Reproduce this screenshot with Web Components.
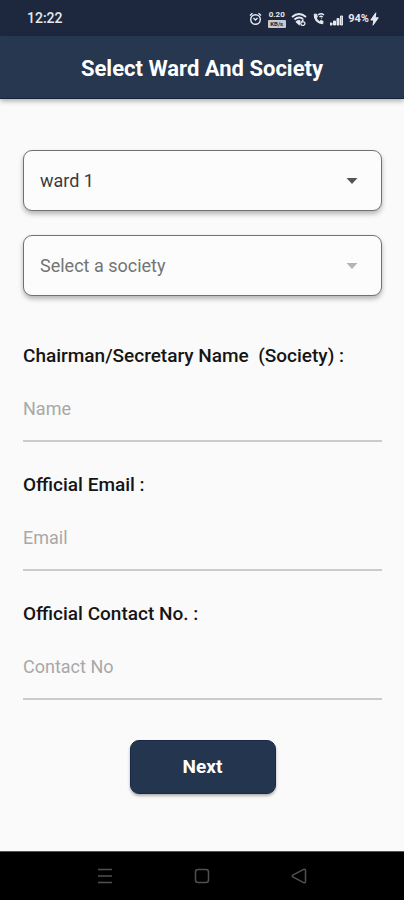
<!DOCTYPE html>
<html lang="en">
<head>
<meta charset="utf-8">
<meta name="viewport" content="width=device-width, initial-scale=1">
<title>Select Ward And Society</title>
<style>
  html, body { margin: 0; height: 100%; }
  body { font-family: Roboto, "Liberation Sans", sans-serif; background: #fafafa; color: #151515; }
</style>
</head>
<body>
<app-screen>
  <status-bar slot="top" time="12:22" rate="0.20" battery="94%"></status-bar>
  <app-bar slot="top">Select Ward And Society</app-bar>
  <select-card label="Ward" value="ward 1"></select-card>
  <select-card label="Society" placeholder="Select a society"></select-card>
  <text-field class="first" placeholder="Name" type="text">Chairman/Secretary Name&nbsp; (Society) :</text-field>
  <text-field placeholder="Email" type="email">Official Email :</text-field>
  <text-field placeholder="Contact No" type="tel">Official Contact No. :</text-field>
  <primary-button>Next</primary-button>
  <nav-bar slot="bottom"></nav-bar>
</app-screen>

<script>
const define = (name, render) => customElements.define(name, class extends HTMLElement {
  connectedCallback() {
    if (this.shadowRoot) return;
    this.attachShadow({ mode: 'open' }).innerHTML = render(this);
  }
});

define('app-screen', () => `
  <style>
    :host { display: flex; flex-direction: column; min-height: 100vh; }
    header { position: relative; }
    main { flex: 1; display: flex; flex-direction: column; padding: 51px 22px 24px 23px; }
    ::slotted(select-card) { margin-bottom: 24px; }
    ::slotted(.first) { margin-top: 25px; }
    ::slotted(primary-button) { margin-top: 8px; align-self: center; }
  </style>
  <header><slot name="top"></slot></header>
  <main><slot></slot></main>
  <footer><slot name="bottom"></slot></footer>`);

define('status-bar', el => `
  <style>
    :host { display: flex; align-items: center; justify-content: space-between; height: 36px;
      padding: 0 25px 0 27px; background: #1d283e; color: #e4e9f1; }
    time { font-size: 14px; font-weight: 500; line-height: 16px; }
    .icons { display: flex; align-items: center; gap: 5px; padding-top: 2px; }
    svg { display: block; fill: none; stroke: currentColor; }
    .rate { display: flex; flex-direction: column; align-items: center; width: 19px; font-weight: 700; }
    .num { font-size: 8px; line-height: 10px; }
    .unit { width: 18px; background: #c5cbd6; color: #1d283e; font-size: 6px; line-height: 8px; text-align: center; border-radius: 1px; }
    .battery { display: flex; align-items: center; gap: 1px; font-size: 11px; font-weight: 700; line-height: 12px; }
  </style>
  <time>${el.getAttribute('time')}</time>
  <div class="icons">
    <svg width="13" height="14" viewBox="0 0 13 14" stroke-width="1.4" aria-label="Alarm" role="img">
      <circle cx="6.5" cy="7.5" r="4.8"/><path d="M4.5 6l2 2 2-2M1 3.5 3.5 1.2M12 3.5 9.5 1.2"/></svg>
    <div class="rate"><span class="num">${el.getAttribute('rate')}</span><span class="unit">KB/s</span></div>
    <svg width="16" height="14" viewBox="0 0 16 14" stroke-width="1.9" aria-label="Wi-Fi" role="img">
      <path d="M1 5Q8-1 15 5M3.4 7.5Q8 3.8 12 7"/><path d="M5.8 10Q7 8.7 8.5 9.2L8 12z" fill="currentColor"/>
      <path d="M12.5 7.5 10.5 10a2 2 0 1 0 3 .3q-1-1-2.5 0" stroke-width="1.3"/></svg>
    <svg width="13" height="14" viewBox="0 0 13 14" aria-label="Wi-Fi calling" role="img">
      <path d="M2.2 2.2Q2 11 10.8 11.8L11 9.2 8.7 8.5 7.4 9.5Q5 8.3 4.3 6L5.3 4.9 4.6 2.2z" fill="currentColor"/>
      <path d="M6 3Q9 .5 12 3M7.5 5Q9 3.6 10.8 5M9 6.5h.6" stroke-width="1.4"/></svg>
    <svg width="13" height="14" viewBox="0 0 13 14" stroke="none" aria-label="Signal" role="img">
      <path fill="currentColor" d="M0 11h2v2H0zM3.5 9h2v4h-2zM7 6.5h2V13H7z"/><path fill="#a5adba" d="M10.5 4h2v9h-2z"/></svg>
    <div class="battery">${el.getAttribute('battery')}
      <svg width="9" height="14" viewBox="0 0 9 14" stroke="none" aria-label="Charging" role="img"><path fill="currentColor" d="M5.8.8.8 8h3L3 13.2 8.3 5.8H5.2z"/></svg></div>
  </div>`);

define('app-bar', () => `
  <style>
    :host { display: block; background: #26374f; border-bottom: 1px solid #14243c; box-shadow: 0 2px 5px rgba(0,0,0,.32); color: #fff; }
    h1 { margin: 0; padding: 20px 16px 17px; font-size: 22px; line-height: 25px; font-weight: 700; text-align: center; }
  </style>
  <h1><slot></slot></h1>`);

define('select-card', el => {
  const v = el.getAttribute('value'), p = el.getAttribute('placeholder');
  return `
  <style>
    :host { display: grid; align-items: center; background: #fcfcfc; border: 1px solid #6f7275; border-radius: 9px;
      box-shadow: 0 3px 5px rgba(0,0,0,.28); }
    select, svg { grid-area: 1 / 1; }
    select { appearance: none; width: 100%; height: 59px; padding: 0 48px 0 16px; border: 0; border-radius: 8px; background: transparent;
      font: 400 18px/20px Roboto, "Liberation Sans", sans-serif; color: ${v ? '#3c3c3c' : '#747474'}; }
    svg { justify-self: end; margin-right: 23px; pointer-events: none; fill: ${v ? '#555' : '#b5b5b5'}; }
  </style>
  <select aria-label="${el.getAttribute('label')}"><option>${v || p}</option></select>
  <svg width="12" height="6" viewBox="0 0 12 6"><path d="M.5 0h11L6 6z"/></svg>`;
});

define('text-field', el => `
  <style>
    :host { display: block; height: 129px; }
    label { display: block; font-size: 19px; line-height: 22px; font-weight: 500; }
    input { box-sizing: border-box; display: block; width: 100%; height: 66px; margin-top: 9px; padding: 0; border: 0;
      border-bottom: 2px solid #cbcbcb; border-radius: 0; background: transparent; outline: 0;
      font: 400 18px/20px Roboto, "Liberation Sans", sans-serif; color: #151515; }
    input::placeholder { color: #a8a8a8; opacity: 1; }
  </style>
  <label for="field"><slot></slot></label>
  <input id="field" type="${el.getAttribute('type')}" placeholder="${el.getAttribute('placeholder')}">`);

define('primary-button', () => `
  <style>
    :host { display: block; }
    button { min-width: 146px; height: 54px; padding: 0 24px; border: 1px solid #172946; border-radius: 9px; background: #24364f; color: #fff;
      box-shadow: 0 2px 3px rgba(0,0,0,.3); font: 700 19px/22px Roboto, "Liberation Sans", sans-serif; display: block; }
  </style>
  <button type="button"><slot></slot></button>`);

define('nav-bar', () => `
  <style>
    :host { display: block; background: #000; border-top: 1px solid #555; }
    nav { display: flex; justify-content: center; gap: 73px; height: 48px; align-items: center; }
    button { padding: 0; width: 24px; height: 24px; border: 0; background: none; color: #505050; }
    svg { display: block; fill: none; stroke: currentColor; stroke-width: 1.5; stroke-linejoin: round; }
  </style>
  <nav aria-label="System">
    <button type="button" aria-label="Recent apps"><svg width="24" height="24"><path d="M5 5.5h14M5 12h14M5 18.5h14"/></svg></button>
    <button type="button" aria-label="Home"><svg width="24" height="24"><rect x="5.5" y="5.5" width="13" height="13" rx="2.5"/></svg></button>
    <button type="button" aria-label="Back"><svg width="24" height="24"><path d="M5.8 11.2 16.6 5.4Q18.5 4.8 18.5 6.6V17.4Q18.5 19.2 16.6 18.6L5.8 12.8Q4.8 12 5.8 11.2z"/></svg></button>
  </nav>`);
</script>
</body>
</html>
